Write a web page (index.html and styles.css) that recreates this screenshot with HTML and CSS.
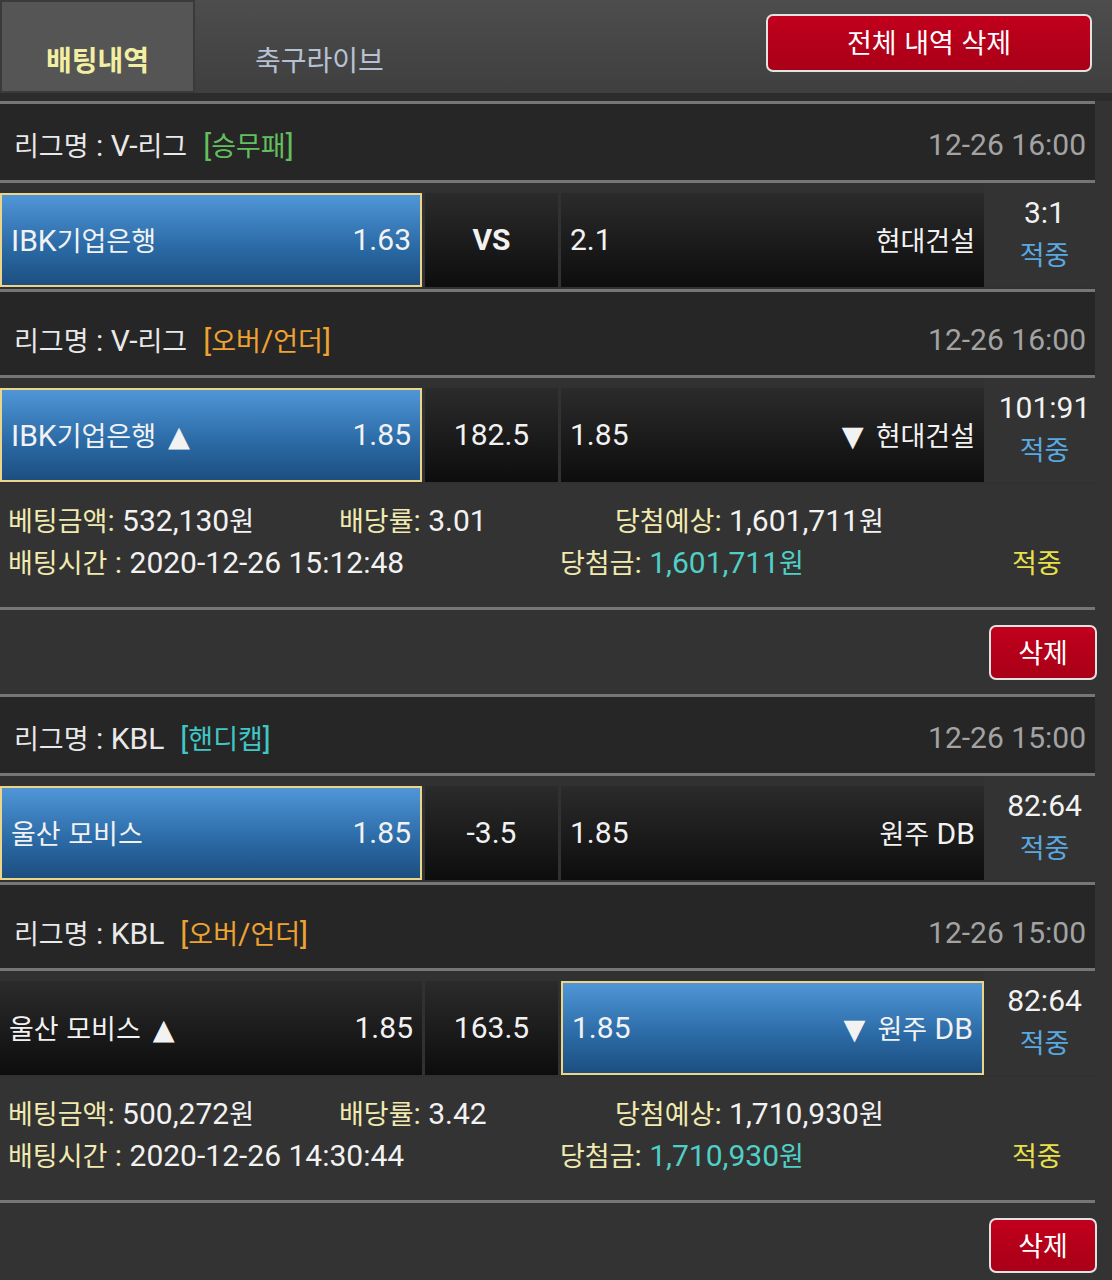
FILE: index.html
```html
<!DOCTYPE html>
<html lang="ko">
<head>
<meta charset="utf-8">
<title>배팅내역</title>
<link rel="stylesheet" href="styles.css">
</head>
<body>
<header class="topbar">
  <div class="tab active">배팅내역</div>
  <div class="tab live">축구라이브</div>
  <button class="btn-all">전체 내역 삭제</button>
</header>

<main class="list">
  <section class="bet">
    <div class="league">
      <div class="lname"><span class="k">리그명</span> : V-<span class="k">리그</span><span class="tag green">[<span class="k">승무패</span>]</span></div>
      <div class="time">12-26 16:00</div>
    </div>
    <div class="match">
      <div class="cell home pick"><span>IBK<span class="k">기업은행</span></span><span>1.63</span></div>
      <div class="cell mid vs">VS</div>
      <div class="cell away"><span>2.1</span><span class="k">현대건설</span></div>
      <div class="result"><span>3:1</span><span class="k hit">적중</span></div>
    </div>
    <div class="league">
      <div class="lname"><span class="k">리그명</span> : V-<span class="k">리그</span><span class="tag orange">[<span class="k">오버</span>/<span class="k">언더</span>]</span></div>
      <div class="time">12-26 16:00</div>
    </div>
    <div class="match">
      <div class="cell home pick"><span>IBK<span class="k">기업은행</span><span class="tri up">▲</span></span><span>1.85</span></div>
      <div class="cell mid">182.5</div>
      <div class="cell away"><span>1.85</span><span><span class="tri down">▼</span><span class="k">현대건설</span></span></div>
      <div class="result"><span>101:91</span><span class="k hit">적중</span></div>
    </div>
    <div class="info">
      <div class="line">
        <span class="c1"><span class="k lbl">베팅금액</span><span class="lbl">:</span> 532,130<span class="k">원</span></span>
        <span class="c2"><span class="k lbl">배당률</span><span class="lbl">:</span> 3.01</span>
        <span><span class="k lbl">당첨예상</span><span class="lbl">:</span> 1,601,711<span class="k">원</span></span>
      </div>
      <div class="line">
        <span class="c1w"><span class="k lbl">배팅시간</span><span class="lbl"> :</span> 2020-12-26 15:12:48</span>
        <span class="c2w"><span class="k lbl">당첨금</span><span class="lbl">:</span> <span class="win">1,601,711<span class="k">원</span></span></span>
        <span class="k yhit">적중</span>
      </div>
    </div>
    <div class="actions"><button class="btn-del">삭제</button></div>
  </section>

  <section class="bet">
    <div class="league">
      <div class="lname"><span class="k">리그명</span> : KBL<span class="tag cyan">[<span class="k">핸디캡</span>]</span></div>
      <div class="time">12-26 15:00</div>
    </div>
    <div class="match">
      <div class="cell home pick"><span class="k">울산 모비스</span><span>1.85</span></div>
      <div class="cell mid">-3.5</div>
      <div class="cell away"><span>1.85</span><span><span class="k">원주</span> DB</span></div>
      <div class="result"><span>82:64</span><span class="k hit">적중</span></div>
    </div>
    <div class="league">
      <div class="lname"><span class="k">리그명</span> : KBL<span class="tag orange">[<span class="k">오버</span>/<span class="k">언더</span>]</span></div>
      <div class="time">12-26 15:00</div>
    </div>
    <div class="match">
      <div class="cell home"><span><span class="k">울산 모비스</span><span class="tri up">▲</span></span><span>1.85</span></div>
      <div class="cell mid">163.5</div>
      <div class="cell away pick"><span>1.85</span><span><span class="tri down">▼</span><span class="k">원주</span> DB</span></div>
      <div class="result"><span>82:64</span><span class="k hit">적중</span></div>
    </div>
    <div class="info">
      <div class="line">
        <span class="c1"><span class="k lbl">베팅금액</span><span class="lbl">:</span> 500,272<span class="k">원</span></span>
        <span class="c2"><span class="k lbl">배당률</span><span class="lbl">:</span> 3.42</span>
        <span><span class="k lbl">당첨예상</span><span class="lbl">:</span> 1,710,930<span class="k">원</span></span>
      </div>
      <div class="line">
        <span class="c1w"><span class="k lbl">배팅시간</span><span class="lbl"> :</span> 2020-12-26 14:30:44</span>
        <span class="c2w"><span class="k lbl">당첨금</span><span class="lbl">:</span> <span class="win">1,710,930<span class="k">원</span></span></span>
        <span class="k yhit">적중</span>
      </div>
    </div>
    <div class="actions"><button class="btn-del">삭제</button></div>
  </section>
</main>
</body>
</html>
```

FILE: styles.css
```css
* {
  box-sizing: border-box;
  margin: 0;
  padding: 0;
}

html, body {
  background: #333333;
}

body {
  width: 1112px;
  overflow: hidden;
  font-family: Roboto, "Noto Sans CJK KR", sans-serif;
  font-size: 30px;
  color: #f2f2f2;
}

.k {
  font-family: "Noto Sans CJK KR", sans-serif;
  font-size: 0.9em;
}

.tri {
  font-family: "DejaVu Sans", sans-serif;
  font-size: 0.95em;
}

.tri.up {
  margin-left: 12px;
}

.tri.down {
  margin-right: 12px;
}

/* top bar */
.topbar {
  display: flex;
  height: 101px;
  background: linear-gradient(#4d4d4d, #3f3f3f 92%, #2c2c2c 92%, #2c2c2c);
}

.tab {
  width: 195px;
  height: 93px;
  display: flex;
  align-items: center;
  justify-content: center;
  padding-top: 24px;
  font-family: "Noto Sans CJK KR", sans-serif;
  font-size: 28px;
  line-height: 1;
}

.tab.active {
  background: #555555;
  color: #f3efa2;
  font-weight: 700;
  box-shadow: inset 0 0 0 2px #3a3a3a;
}

.tab.live {
  justify-content: flex-start;
  padding-left: 60px;
  color: #b7c1d4;
}

.btn-all {
  margin: 14px 20px 0 auto;
  width: 326px;
  height: 58px;
  border: 2px solid #e2e2e2;
  border-radius: 7px;
  background: linear-gradient(#c1001d, #a90017);
  color: #ffffff;
  font-family: "Noto Sans CJK KR", sans-serif;
  font-size: 27px;
  line-height: 1;
  padding-bottom: 4px;
}

/* list */
.list {
  width: 1095px;
}

.league {
  height: 79px;
  border-top: 3px solid #767676;
  background: #262626;
  display: flex;
  align-items: center;
  justify-content: space-between;
  padding: 4px 9px 0 14px;
  color: #e9e9e9;
}

.match + .league {
  height: 86px;
  padding-top: 11px;
}

.tag {
  margin-left: 16px;
}

.green { color: #63bf5e; }
.orange { color: #eea232; }
.cyan { color: #3fc6c6; }

.time {
  color: #a3a3a3;
}

.match {
  display: flex;
  height: 109px;
  border-top: 3px solid #767676;
  padding: 10px 0 2px;
  background: #313131;
}

.cell {
  display: flex;
  align-items: center;
  justify-content: space-between;
  padding: 0 9px 2px;
  white-space: nowrap;
  background: linear-gradient(#2b2b2b, #0d0d0d);
}

.home { width: 422px; }
.mid {
  width: 133px;
  margin-left: 3px;
  justify-content: center;
}
.away {
  width: 423px;
  margin-left: 3px;
}

.vs {
  font-weight: 700;
}

.cell.pick {
  border: 2px solid #ecd488;
  background: linear-gradient(#5096d7, #2c6ca8 55%, #1c4f80);
}

.result {
  flex: 1;
  display: flex;
  flex-direction: column;
  align-items: center;
  line-height: 41px;
  background: #333333;
  margin-top: -10px;
  padding: 9px 0 0 10px;
}

.hit {
  color: #5aa8e0;
}

/* info */
.info {
  height: 123px;
  padding: 15px 0 0 8px;
  line-height: 41px;
}

.line {
  display: flex;
  white-space: nowrap;
}

.c1 { width: 331px; }
.c2 { width: 276px; }
.c1w { width: 552px; }
.c2w { width: 452px; }

.lbl { color: #f1eab0; }
.win { color: #4fcfc6; }
.yhit { color: #e8e04a; }

/* actions */
.actions {
  height: 87px;
  border-top: 3px solid #767676;
  display: flex;
  justify-content: flex-end;
  padding-top: 15px;
}

.btn-del {
  width: 108px;
  height: 55px;
  margin-right: -2px;
  border: 2px solid #e2e2e2;
  border-radius: 7px;
  background: linear-gradient(#c1001d, #a90017);
  color: #ffffff;
  font-family: "Noto Sans CJK KR", sans-serif;
  font-size: 27px;
  line-height: 1;
  padding-bottom: 3px;
}
```
